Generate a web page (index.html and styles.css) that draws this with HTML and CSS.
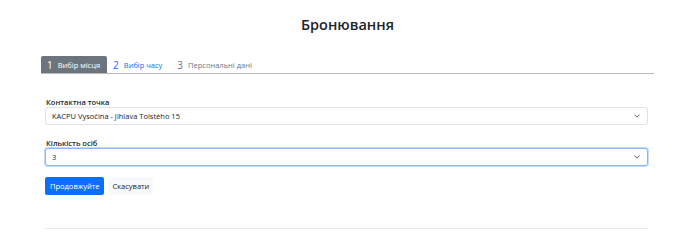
FILE: index.html
```html
<!DOCTYPE html>
<html lang="uk">
<head>
    <meta charset="UTF-8">
    <meta name="viewport" content="width=device-width, initial-scale=1.0">
    <title>Бронювання</title>
    <link rel="stylesheet" href="styles.css">
</head>
<body>

<div class="booking">
    <h1>Бронювання</h1>

    <!-- Steps -->
    <div class="steps">
        <div class="step active"><span class="num">1</span>Вибір місця</div>
        <div class="step next"><span class="num">2</span>Вибір часу</div>
        <div class="step"><span class="num">3</span>Персональні дані</div>
    </div>

    <form class="booking-form">
        <div class="field">
            <label for="place">Контактна точка</label>
            <div class="select-wrap">
                <select id="place">
                    <option>KACPU Vysočina - Jihlava Tolstého 15</option>
                </select>
                <svg class="chevron" width="6" height="6" viewBox="0 0 16 16"><path d="M2 5l6 6 6-6" fill="none" stroke="#495057" stroke-width="2.4" stroke-linecap="round" stroke-linejoin="round"/></svg>
            </div>
        </div>

        <div class="field">
            <label for="persons">Кількість осіб</label>
            <div class="select-wrap">
                <select id="persons" class="focused">
                    <option>3</option>
                </select>
                <svg class="chevron" width="6" height="6" viewBox="0 0 16 16"><path d="M2 5l6 6 6-6" fill="none" stroke="#495057" stroke-width="2.4" stroke-linecap="round" stroke-linejoin="round"/></svg>
            </div>
        </div>

        <div class="actions">
            <button type="button" class="btn btn-primary">Продовжуйте</button>
            <button type="button" class="btn btn-light">Скасувати</button>
        </div>

        <hr>
    </form>
</div>

</body>
</html>
```

FILE: styles.css
```css
body {
    font-family: "Open Sans", Arial, sans-serif;
    background-color: #fff;
    color: #212529;
    margin: 0;
    padding: 0;
}

.booking {
    width: 613px;
    margin-left: 41px;
    padding-top: 15px;
}

h1 {
    margin: 0;
    font-size: 14.5px;
    line-height: 20px;
    font-weight: 600;
    text-align: center;
    color: #212529;
}

.steps {
    display: flex;
    margin-top: 21px;
    border-bottom: 1px solid #b8b8b8;
}

.step {
    display: flex;
    align-items: center;
    height: 17px;
    padding: 0 7px 0 6px;
    font-size: 7.5px;
    color: #6c757d;
}

.step .num {
    font-size: 10px;
    margin-right: 5px;
}

.step.active {
    background-color: #6c757d;
    color: #fff;
    border-radius: 2px 2px 0 0;
}

.step.next {
    color: #0d6efd;
    padding-right: 9px;
}

.booking-form {
    margin: 23px 6px 0 4px;
}

.field {
    margin-bottom: 13px;
}

.field label {
    display: block;
    font-size: 7.5px;
    line-height: 10px;
    font-weight: 600;
    margin-left: 1px;
}

.select-wrap {
    position: relative;
}

.select-wrap select {
    -webkit-appearance: none;
    appearance: none;
    display: block;
    width: 100%;
    height: 18px;
    margin: 0;
    padding: 0 20px 0 6px;
    font-family: inherit;
    font-size: 7.5px;
    color: #212529;
    background-color: #fff;
    border: 1px solid #dee2e6;
    border-radius: 3px;
    box-sizing: border-box;
}

.select-wrap select.focused {
    border-color: #86b7fe;
    box-shadow: 0 0 0 1px rgba(13, 110, 253, 0.25);
}

.chevron {
    position: absolute;
    right: 8px;
    top: 6px;
}

.actions {
    display: flex;
    gap: 4px;
    margin-top: -2px;
}

.btn {
    height: 18px;
    padding: 0 5px;
    font-family: inherit;
    font-size: 7.5px;
    border: none;
    border-radius: 2px;
}

.btn-primary {
    background-color: #0d6efd;
    color: #fff;
}

.btn-light {
    background-color: #f8f9fa;
    color: #212529;
    padding: 0 4px;
}

hr {
    margin: 33px 0 0;
    border: none;
    border-top: 1px solid #e9ecef;
}
```
